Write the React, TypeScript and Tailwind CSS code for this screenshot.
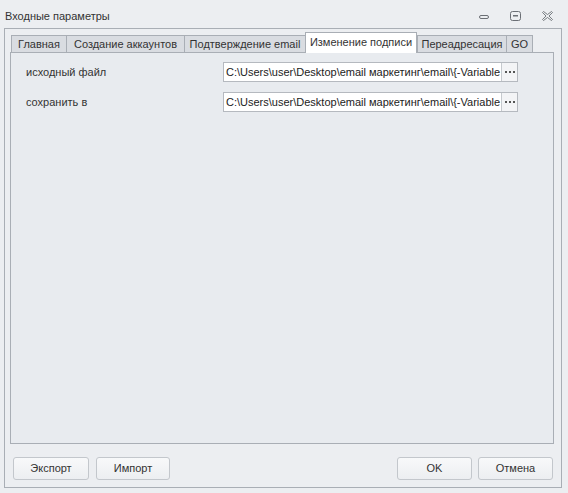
import React from 'react';

const tabs = [
  { label: 'Главная', w: 'w-[56px]' },
  { label: 'Создание аккаунтов', w: 'w-[119px]' },
  { label: 'Подтверждение email', w: 'w-[122px]' },
  { label: 'Изменение подписи', w: 'w-[112px]', active: true },
  { label: 'Переадресация', w: 'w-[90px]' },
  { label: 'GO', w: 'w-[27px]' },
];

const path = 'C:\\Users\\user\\Desktop\\email маркетинг\\email\\{-Variable';

const PathRow: React.FC<{ label: string }> = ({ label }) => (
  <div className="flex items-center h-[20px]">
    <span className="w-[197px] shrink-0">{label}</span>
    <div className="flex h-full w-[295px] border border-[#b5b9bf] bg-white">
      <div className="flex-1 min-w-0 overflow-hidden whitespace-nowrap pl-[2px] leading-[18px] text-[#222]">{path}</div>
      <button className="w-[16px] shrink-0 border-l border-[#c5c9ce] bg-[#f3f4f6] flex items-center justify-center gap-[2px]">
        <span className="w-[2px] h-[2px] bg-[#555]" />
        <span className="w-[2px] h-[2px] bg-[#555]" />
        <span className="w-[2px] h-[2px] bg-[#555]" />
      </button>
    </div>
  </div>
);

const Btn: React.FC<{ children: React.ReactNode; w?: string }> = ({ children, w = 'w-[75px]' }) => (
  <button className={`${w} h-[23px] rounded-[3px] border border-[#c3c7cc] bg-gradient-to-b from-[#f8f9fa] to-[#eceef1] text-[#333]`}>
    {children}
  </button>
);

export default function App() {
  return (
    <div className="w-[568px] h-[493px] bg-[#eceef1] flex flex-col text-[11px] text-[#333] font-['Liberation_Sans',Arial,sans-serif] select-none">
      {/* Title bar */}
      <div className="h-[28px] shrink-0 flex items-center pl-[5px] pr-[15px] pt-[4px]">
        <span className="flex-1">Входные параметры</span>
        <div className="flex items-center gap-[21px]">
          <svg width="10" height="10" viewBox="0 0 10 10">
            <rect x="0.5" y="4.5" width="9" height="3" rx="1.5" fill="none" stroke="#6b6f75" />
          </svg>
          <svg width="11" height="10" viewBox="0 0 11 10">
            <rect x="0.5" y="0.5" width="10" height="9" rx="2" fill="none" stroke="#6b6f75" />
            <rect x="3" y="4" width="5" height="1.5" fill="#6b6f75" />
          </svg>
          <svg width="11" height="10" viewBox="0 0 11 10">
            <path
              d="M0.5 1.5 L1.5 0.5 L5.5 3.5 L9.5 0.5 L10.5 1.5 L7 5 L10.5 8.5 L9.5 9.5 L5.5 6.5 L1.5 9.5 L0.5 8.5 L4 5 Z"
              fill="none"
              stroke="#6b6f75"
              strokeWidth="0.9"
            />
          </svg>
        </div>
      </div>

      {/* Frame */}
      <div className="flex-1 ml-[4px] mr-[6px] mb-[5px] border border-[#a9aeb5] flex flex-col pl-[5px] pr-[7px] pt-[3px] pb-[7px]">
        {/* Tabs */}
        <div className="h-[20px] shrink-0 flex items-end pl-[1px] relative z-10">
          {tabs.map((t) =>
            t.active ? (
              <div
                key={t.label}
                className={`${t.w} h-[21px] -mb-[1px] border border-b-0 border-[#a9aeb5] bg-white flex items-center justify-center pb-[1px] whitespace-nowrap`}
              >
                {t.label}
              </div>
            ) : (
              <div
                key={t.label}
                className={`${t.w} h-[17px] border border-b-0 border-[#a9aeb5] bg-[#d9dce1] flex items-center justify-center -mr-[1px] whitespace-nowrap`}
              >
                {t.label}
              </div>
            ),
          )}
        </div>

        {/* Tab panel */}
        <div className="flex-1 border border-[#a9aeb5] bg-[#e8ebef] flex flex-col gap-[10px] pl-[15px] pt-[9px]">
          <PathRow label="исходный файл" />
          <PathRow label="сохранить в" />
        </div>

        {/* Footer buttons */}
        <div className="shrink-0 flex items-center pt-[13px] pl-[3px] pr-[1px]">
          <div className="flex gap-[7px]">
            <Btn w="w-[76px]">Экспорт</Btn>
            <Btn w="w-[74px]">Импорт</Btn>
          </div>
          <div className="flex-1" />
          <div className="flex gap-[6px]">
            <Btn>OK</Btn>
            <Btn>Отмена</Btn>
          </div>
        </div>
      </div>
    </div>
  );
}
